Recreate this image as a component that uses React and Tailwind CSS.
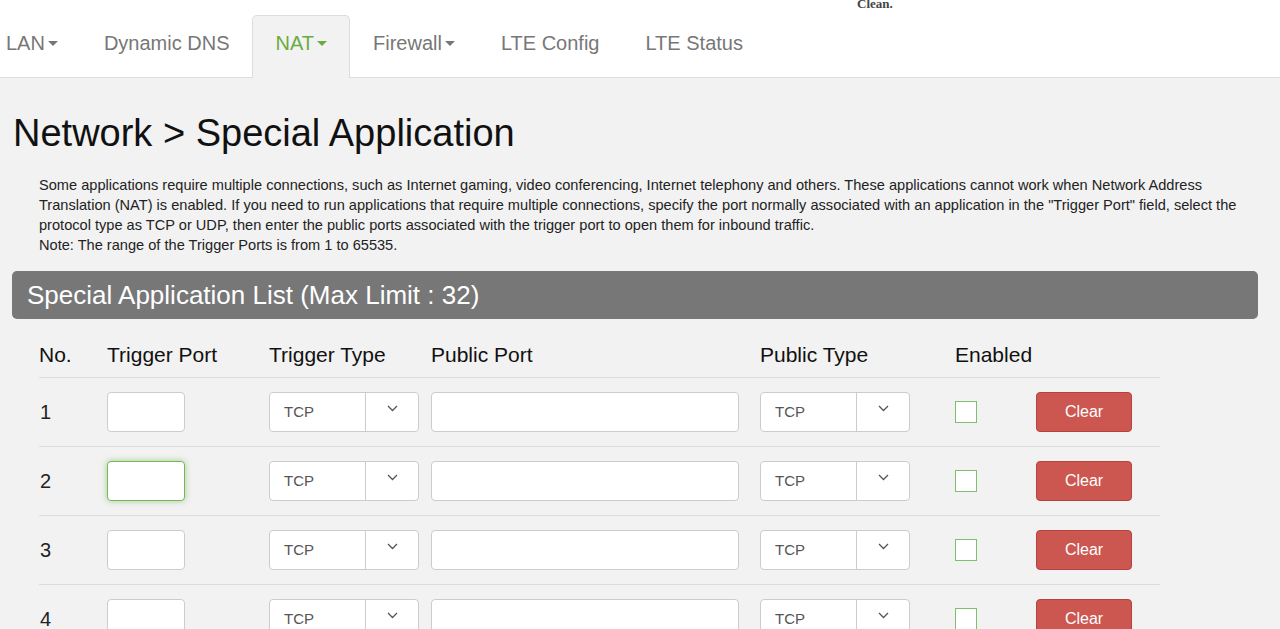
import React from 'react';

const navItems = [
  { label: 'LAN', caret: true },
  { label: 'Dynamic DNS' },
  { label: 'NAT', caret: true, active: true },
  { label: 'Firewall', caret: true },
  { label: 'LTE Config' },
  { label: 'LTE Status' },
];

const rows = [1, 2, 3, 4];

function Caret() {
  return (
    <span className="inline-block ml-[3px] w-0 h-0 border-t-[5px] border-t-current border-x-[5px] border-x-transparent align-middle" />
  );
}

function Select() {
  return (
    <div className="flex w-[150px] h-[40px] bg-white border border-[#cccccc] rounded-[4px]">
      <div className="w-[95px] flex items-center pl-[14px] text-[15px] text-[#555]">TCP</div>
      <div className="flex-1 border-l border-[#cccccc] flex justify-center pt-[12px]">
        <svg width="11" height="7" viewBox="0 0 11 7">
          <path d="M1 1l4.5 4.5L10 1" fill="none" stroke="#555" strokeWidth="1.3" />
        </svg>
      </div>
    </div>
  );
}

export default function App() {
  return (
    <div className="h-[629px] bg-[#f2f2f2] font-['Liberation_Sans',Arial,sans-serif] overflow-hidden">

      {/* Top nav */}
      <header className="h-[78px] bg-white border-b border-[#dddddd] flex flex-col">
        <div className="h-[15px] pl-[857px] mt-[-3px] text-[13px] leading-none font-bold text-[#444] font-['Liberation_Serif',serif]">
          Clean.
        </div>
        <nav className="flex ml-[-17px] mt-auto mb-[-1px]">
          {navItems.map((item) => (
            <div
              key={item.label}
              className={`h-[63px] px-[22px] flex items-center pb-[8px] text-[20px] border border-b-0 rounded-t-[5px] ${
                item.active
                  ? 'bg-[#f2f2f2] border-[#dddddd] text-[#6aac3f]'
                  : 'border-transparent text-[#777777]'
              }`}
            >
              {item.label}
              {item.caret && <Caret />}
            </div>
          ))}
        </nav>
      </header>

      <main className="pt-[33px]">
        <h1 className="pl-[13px] text-[38px] leading-[44px] text-[#111]">Network &gt; Special Application</h1>

        <p className="mt-[20px] pl-[39px] pr-[20px] text-[14.6px] leading-[20px] text-[#222]">
          Some applications require multiple connections, such as Internet gaming, video conferencing, Internet telephony and others. These applications cannot work when Network Address Translation (NAT) is enabled. If you need to run applications that require multiple connections, specify the port normally associated with an application in the "Trigger Port" field, select the protocol type as TCP or UDP, then enter the public ports associated with the trigger port to open them for inbound traffic.
          <br />
          Note: The range of the Trigger Ports is from 1 to 65535.
        </p>

        <div className="mt-[16px] mx-[12px] w-[1246px] h-[48px] bg-[#777777] rounded-[5px] flex items-center pl-[15px] text-[26px] text-white">
          Special Application List (Max Limit : 32)
        </div>

        <div className="ml-[39px] mt-[11px] w-[1121px]">
          <div className="grid grid-cols-[68px_162px_162px_329px_195px_81px_124px] h-[48px] items-center border-b border-[#dddddd] text-[21px] text-[#111] pt-[2px]">
            <div>No.</div>
            <div>Trigger Port</div>
            <div>Trigger Type</div>
            <div>Public Port</div>
            <div>Public Type</div>
            <div>Enabled</div>
            <div />
          </div>

          {rows.map((n) => (
            <div
              key={n}
              className="grid grid-cols-[68px_162px_162px_329px_195px_81px_124px] h-[69px] items-center border-b border-[#dddddd]"
            >
              <div className="pl-[1px] text-[20px] text-[#222]">{n}</div>
              <div>
                <div
                  className={`w-[78px] h-[40px] bg-white rounded-[4px] border ${
                    n === 2
                      ? 'border-[#72b85a] shadow-[0_0_6px_rgba(110,180,80,0.6)]'
                      : 'border-[#cccccc]'
                  }`}
                />
              </div>
              <div><Select /></div>
              <div>
                <div className="w-[308px] h-[40px] bg-white rounded-[4px] border border-[#cccccc]" />
              </div>
              <div><Select /></div>
              <div>
                <div className="w-[22px] h-[22px] bg-white border-[1.5px] border-[#7fbf6e]" />
              </div>
              <div>
                <button className="w-[96px] h-[40px] rounded-[4px] bg-[#cc5650] border border-[#b8433e] text-white text-[16px]">
                  Clear
                </button>
              </div>
            </div>
          ))}
        </div>
      </main>
    </div>
  );
}
